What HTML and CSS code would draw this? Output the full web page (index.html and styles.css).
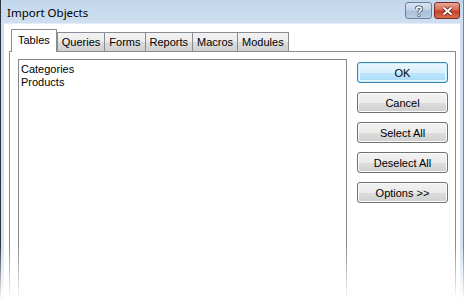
FILE: index.html
```html
<!DOCTYPE html>
<html lang="en">
<head>
    <meta charset="UTF-8">
    <title>Import Objects</title>
    <link rel="stylesheet" href="styles.css">
</head>
<body>
    <div class="window">
        <!-- Title bar -->
        <div class="titlebar">
            <span class="title">Import Objects</span>
            <div class="caption-buttons">
                <div class="cap-btn help">
                    <svg width="12" height="12" viewBox="0 0 12 12">
                        <path d="M3.5 4 C3.5 1.5 8.5 1.5 8.5 4 C8.5 5.6 6 5.8 6 7.5" fill="none" stroke="#3b4a5c" stroke-width="3.2"/>
                        <path d="M3.5 4 C3.5 1.5 8.5 1.5 8.5 4 C8.5 5.6 6 5.8 6 7.5" fill="none" stroke="#fff" stroke-width="1.6"/>
                        <rect x="4.6" y="8.8" width="2.8" height="2.8" fill="#3b4a5c"/>
                        <rect x="5.2" y="9.4" width="1.6" height="1.6" fill="#fff"/>
                    </svg>
                </div>
                <div class="cap-btn close">
                    <svg width="13" height="10" viewBox="0 0 13 10">
                        <path d="M2.5 1.5 L10.5 8.5 M10.5 1.5 L2.5 8.5" stroke="#5a1a12" stroke-width="3.6"/>
                        <path d="M2.5 1.5 L10.5 8.5 M10.5 1.5 L2.5 8.5" stroke="#fff" stroke-width="2"/>
                    </svg>
                </div>
            </div>
        </div>

        <!-- Client area -->
        <div class="client">
            <ul class="tabs">
                <li class="tab active">Tables</li>
                <li class="tab">Queries</li>
                <li class="tab">Forms</li>
                <li class="tab">Reports</li>
                <li class="tab">Macros</li>
                <li class="tab">Modules</li>
            </ul>

            <div class="tab-pane">
                <ul class="object-list">
                    <li>Categories</li>
                    <li>Products</li>
                </ul>

                <div class="actions">
                    <button class="btn default">OK</button>
                    <button class="btn">Cancel</button>
                    <button class="btn">Select All</button>
                    <button class="btn">Deselect All</button>
                    <button class="btn">Options &gt;&gt;</button>
                </div>
            </div>
        </div>
    </div>

    <div class="fade"></div>
</body>
</html>
```

FILE: styles.css
```css
* {
    margin: 0;
    padding: 0;
    box-sizing: border-box;
}

body {
    background-color: #fff;
    font-family: 'Liberation Sans', Arial, sans-serif;
    font-size: 11px;
    color: #000;
    height: 300px;
    overflow: hidden;
}

/* Window frame */
.window {
    width: 464px;
    height: 320px;
    background: linear-gradient(to bottom, #c2d6ec 0px, #cfdff1 22px, #d6e4f3 100%);
    border-left: 1px solid #2b3440;
    border-right: 1px solid #4b8ed1;
    padding: 0 3px 0 3px;
    display: flex;
    flex-direction: column;
}

.titlebar {
    height: 23px;
    display: flex;
    justify-content: space-between;
    align-items: flex-start;
    padding-left: 3px;
}

    .titlebar .title {
        font-family: 'Noto Sans', 'Open Sans', sans-serif;
        font-size: 11.5px;
        line-height: 12px;
        padding-top: 7px;
        color: #000;
    }

.caption-buttons {
    display: flex;
    gap: 2px;
    padding-top: 2px;
}

.cap-btn {
    width: 27px;
    height: 17px;
    border: 1px solid #6d7f96;
    border-radius: 3px;
    display: flex;
    align-items: center;
    justify-content: center;
}

    .cap-btn.help {
        background: linear-gradient(to bottom, #d9e5f2 0%, #c2d3e7 45%, #a9bfd9 55%, #b9cde4 100%);
    }

    .cap-btn.close {
        width: 26px;
        border-color: #7a2a1e;
        background: linear-gradient(to bottom, #e8a594 0%, #d86d55 45%, #c4402a 55%, #d5704f 100%);
    }

.client {
    flex: 1;
    background-color: #fff;
    border-top: 1px solid #e3ecf7;
    padding: 5px 4px 0 5px;
    display: flex;
    flex-direction: column;
}

/* Tabs */
.tabs {
    list-style: none;
    display: flex;
    align-items: flex-end;
    height: 22px;
    padding-left: 2px;
}

    .tabs .tab {
        height: 19px;
        padding: 2px 4px 0 4px;
        border: 1px solid #898c95;
        border-bottom: none;
        border-left: none;
        background: linear-gradient(to bottom, #f2f2f2 0%, #ebebeb 50%, #dddddd 51%, #cfcfcf 100%);
        line-height: 14px;
    }

        .tabs .tab:nth-child(2) {
            border-left: 1px solid #898c95;
        }

    .tabs .tab.active {
        height: 23px;
        margin-bottom: -1px;
        padding: 3px 6px 0 6px;
        background: #fff;
        border-left: 1px solid #898c95;
        position: relative;
        z-index: 1;
    }

.tab-pane {
    flex: 1;
    border: 1px solid #898c95;
    padding: 7px 7px 0 8px;
    display: flex;
    gap: 10px;
}

.object-list {
    flex: 1;
    list-style: none;
    border: 1px solid #828790;
    border-bottom: none;
    padding: 3px 2px;
}

    .object-list li {
        line-height: 13px;
    }

/* Buttons */
.actions {
    width: 91px;
    display: flex;
    flex-direction: column;
    gap: 9px;
    padding-top: 3px;
}

.btn {
    height: 21px;
    font-family: 'Liberation Sans', Arial, sans-serif;
    font-size: 11px;
    color: #000;
    border: 1px solid #707070;
    border-radius: 3px;
    background: linear-gradient(to bottom, #f2f2f2 0%, #ebebeb 50%, #dddddd 51%, #cfcfcf 100%);
    box-shadow: inset 0 0 0 1px #fcfcfc;
}

    .btn.default {
        border-color: #3c7fb1;
        background: linear-gradient(to bottom, #eaf6fd 0%, #d9f0fc 50%, #bee6fd 51%, #a7d9f5 100%);
        box-shadow: inset 0 0 0 1px #48d0fa33, inset 0 0 0 2px #e8f6fd;
    }

/* Screenshot fades out at the bottom */
.fade {
    position: absolute;
    left: 0;
    right: 0;
    top: 245px;
    height: 55px;
    background: linear-gradient(to bottom, rgba(255, 255, 255, 0) 0%, rgba(255, 255, 255, 0.6) 60%, #fff 100%);
}
```
